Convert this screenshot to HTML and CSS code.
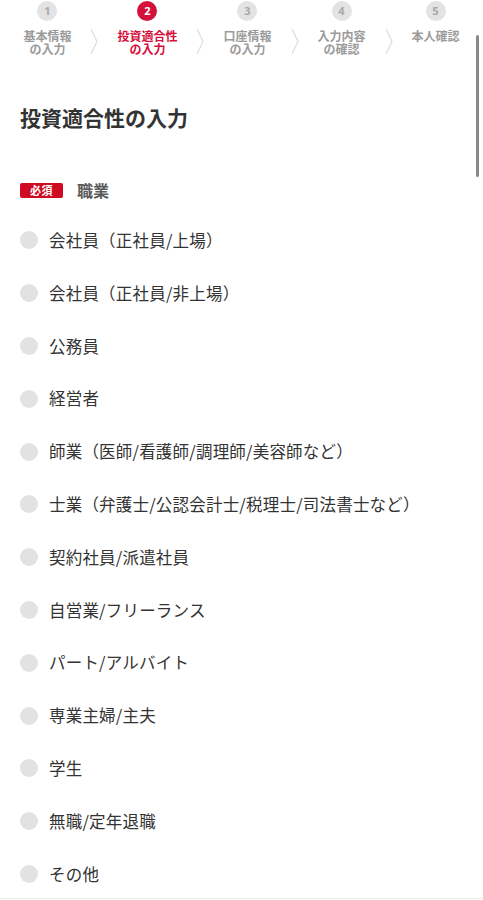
FILE: index.html
```html
<!DOCTYPE html>
<html lang="ja">
<head>
<meta charset="utf-8">
<title>投資適合性の入力</title>
<link rel="stylesheet" href="styles.css">
</head>
<body>
<nav class="stepper">
  <div class="step">
    <span class="num">1</span>
    <span class="label">基本情報<br>の入力</span>
  </div>
  <svg class="chev" width="8" height="27" viewBox="0 0 8 27"><polyline points="1,1 7,13.5 1,26" fill="none" stroke="#dcdcdc" stroke-width="1.2"/></svg>
  <div class="step active">
    <span class="num">2</span>
    <span class="label">投資適合性<br>の入力</span>
  </div>
  <svg class="chev" width="8" height="27" viewBox="0 0 8 27"><polyline points="1,1 7,13.5 1,26" fill="none" stroke="#dcdcdc" stroke-width="1.2"/></svg>
  <div class="step">
    <span class="num">3</span>
    <span class="label">口座情報<br>の入力</span>
  </div>
  <svg class="chev" width="8" height="27" viewBox="0 0 8 27"><polyline points="1,1 7,13.5 1,26" fill="none" stroke="#dcdcdc" stroke-width="1.2"/></svg>
  <div class="step">
    <span class="num">4</span>
    <span class="label">入力内容<br>の確認</span>
  </div>
  <svg class="chev" width="8" height="27" viewBox="0 0 8 27"><polyline points="1,1 7,13.5 1,26" fill="none" stroke="#dcdcdc" stroke-width="1.2"/></svg>
  <div class="step">
    <span class="num">5</span>
    <span class="label">本人確認</span>
  </div>
</nav>

<main class="content">
  <h1 class="title">投資適合性の入力</h1>
  <div class="field-label">
    <span class="badge">必須</span>
    <span class="field-name">職業</span>
  </div>
  <ul class="options">
    <li class="option"><span class="radio"></span>会社員（正社員/上場）</li>
    <li class="option"><span class="radio"></span>会社員（正社員/非上場）</li>
    <li class="option"><span class="radio"></span>公務員</li>
    <li class="option"><span class="radio"></span>経営者</li>
    <li class="option"><span class="radio"></span>師業（医師/看護師/調理師/美容師など）</li>
    <li class="option"><span class="radio"></span>士業（弁護士/公認会計士/税理士/司法書士など）</li>
    <li class="option"><span class="radio"></span>契約社員/派遣社員</li>
    <li class="option"><span class="radio"></span>自営業/フリーランス</li>
    <li class="option"><span class="radio"></span>パート/アルバイト</li>
    <li class="option"><span class="radio"></span>専業主婦/主夫</li>
    <li class="option"><span class="radio"></span>学生</li>
    <li class="option"><span class="radio"></span>無職/定年退職</li>
    <li class="option"><span class="radio"></span>その他</li>
  </ul>
</main>

<div class="scroll-indicator"></div>
<div class="bottom-edge"></div>
</body>
</html>
```

FILE: styles.css
```css
* { box-sizing: border-box; }
html, body {
  margin: 0;
  padding: 0;
  background: #fff;
}
body {
  font-family: "Noto Sans CJK JP", "Noto Sans", sans-serif;
  color: #333;
  width: 483px;
  height: 900px;
  overflow: hidden;
}

.stepper {
  display: flex;
  justify-content: center;
  align-items: flex-start;
  gap: 19px;
  padding-top: 1px;
  height: 56px;
}
.step {
  display: flex;
  flex-direction: column;
  align-items: center;
}
.num {
  width: 20px;
  height: 20px;
  border-radius: 50%;
  background: #e3e3e3;
  color: #a8a8a8;
  font-size: 11px;
  font-weight: 700;
  line-height: 20px;
  text-align: center;
  font-family: "Open Sans", "Noto Sans", sans-serif;
}
.label {
  margin-top: 7.5px;
  font-size: 12px;
  line-height: 13.5px;
  font-weight: 700;
  color: #9b9b9b;
  text-align: center;
  white-space: nowrap;
}
.step.active .num {
  background: #d4103c;
  color: #fff;
}
.step.active .label {
  color: #d4103c;
}
.chev {
  margin-top: 27px;
  flex: none;
}

.content {
  padding: 0 20px;
}
.title {
  margin: 46px 0 0;
  font-size: 21px;
  line-height: 30px;
  font-weight: 700;
  color: #333;
}
.field-label {
  margin-top: 48px;
  display: flex;
  align-items: center;
  gap: 14px;
  height: 20px;
}
.badge {
  width: 43px;
  height: 15px;
  border-radius: 2px;
  background: #cf0a22;
  color: #fff;
  font-size: 11px;
  font-weight: 700;
  line-height: 15px;
  text-align: center;
  letter-spacing: 0.5px;
}
.field-name {
  font-size: 16px;
  font-weight: 700;
  color: #5a5a5a;
}
.options {
  list-style: none;
  margin: 26px 0 0;
  padding: 0;
  display: flex;
  flex-direction: column;
  gap: 24px;
}
.option {
  display: flex;
  align-items: center;
  gap: 11px;
  font-size: 16.5px;
  letter-spacing: 0.2px;
  line-height: 28.8px;
  color: #333;
}
.radio {
  width: 18px;
  height: 18px;
  border-radius: 50%;
  background: #e2e2e2;
  flex: none;
}

.scroll-indicator {
  position: fixed;
  left: 476px;
  top: 35px;
  width: 3px;
  height: 142px;
  border-radius: 2px;
  background: #8a8a8a;
}
.bottom-edge {
  position: fixed;
  left: 0;
  right: 0;
  top: 898px;
  height: 2px;
  border-top: 1px solid #ececec;
  background: #fff;
}
```
